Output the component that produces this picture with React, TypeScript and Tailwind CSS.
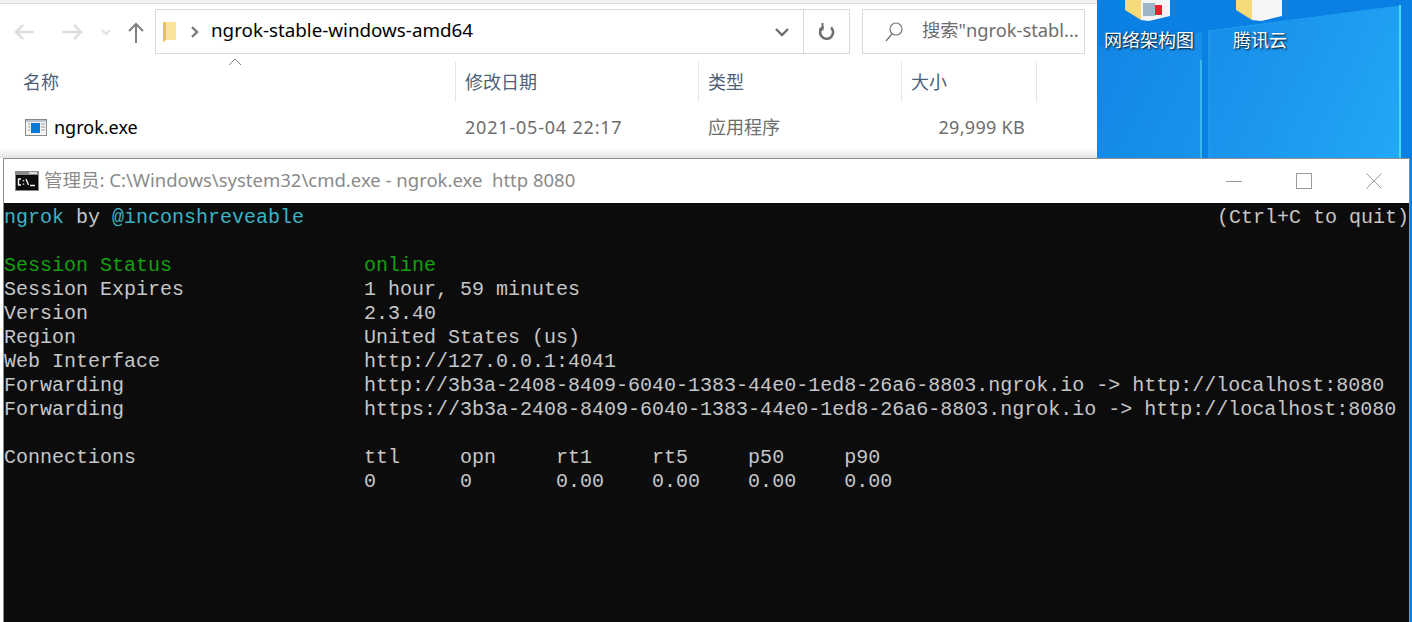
const uiFont = "font-['Noto_Sans','Noto_Sans_CJK_SC',sans-serif]";

const columns = [
  { label: "修改日期", width: "w-[243px]" },
  { label: "类型", width: "w-[203px]" },
  { label: "大小", width: "w-[135px]" },
];

function Terminal() {
  const rows = [
    "Session Expires               1 hour, 59 minutes",
    "Version                       2.3.40",
    "Region                        United States (us)",
    "Web Interface                 http://127.0.0.1:4041",
    "Forwarding                    http://3b3a-2408-8409-6040-1383-44e0-1ed8-26a6-8803.ngrok.io -> http://localhost:8080",
    "Forwarding                    https://3b3a-2408-8409-6040-1383-44e0-1ed8-26a6-8803.ngrok.io -> http://localhost:8080",
    "",
    "Connections                   ttl     opn     rt1     rt5     p50     p90",
    "                              0       0       0.00    0.00    0.00    0.00",
  ];
  return (
    <div className="flex-1 bg-[#0c0c0c] pt-[3px] text-[20px] leading-6 text-[#c6c6c6] whitespace-pre font-['Liberation_Mono',monospace] overflow-hidden">
      <div className="flex justify-between w-[1405px]">
        <div>
          <span className="text-[#3ab4c4]">ngrok</span> by <span className="text-[#3ab4c4]">@inconshreveable</span>
        </div>
        <div>(Ctrl+C to quit)</div>
      </div>
      <div className="h-6" />
      <div className="text-[#13a10e]">{"Session Status                online"}</div>
      {rows.map((row, i) => (
        <div key={i} className="h-6">
          {row}
        </div>
      ))}
    </div>
  );
}

function Explorer() {
  return (
    <div className={`w-[1097px] shrink-0 h-[158px] bg-white ${uiFont} flex flex-col`}>
      <div className="h-[4px] bg-[#f0f0f0] border-b border-[#dcdcdc]" />
      {/* toolbar */}
      <div className="flex items-center h-[45px] mt-[5px]">
        <div className="w-[155px] flex items-center shrink-0">
          <svg width="155" height="45" viewBox="0 0 155 45" fill="none">
            <path d="M17 23h17M23 16l-7 7 7 7" stroke="#dedede" strokeWidth="2.5" />
            <path d="M62 23h18M74 16l7 7-7 7" stroke="#dedede" strokeWidth="2.5" />
            <path d="M102 21l4 4 4-4" stroke="#dedede" strokeWidth="2" />
            <path d="M136 34V16M129 22l7-7 7 7" stroke="#7f7f7f" strokeWidth="2" />
          </svg>
        </div>
        <div className="w-[695px] h-[45px] border border-[#d9d9d9] flex items-center">
          <svg width="16" height="22" viewBox="0 0 16 22" className="ml-[6px] shrink-0">
            <path d="M1 1h13v18H4l-3 2z" fill="#f6d978" />
            <path d="M4 1h10v18H4z" fill="#fbe49a" />
            <path d="M1 1h3v18l-3 2z" fill="#e9c355" />
          </svg>
          <svg width="10" height="12" viewBox="0 0 10 12" className="ml-[12px] shrink-0" fill="none">
            <path d="M2 1l5 5-5 5" stroke="#7a7a7a" strokeWidth="2.4" />
          </svg>
          <span className="ml-[11px] text-[18.8px] text-black leading-none -translate-y-px">ngrok-stable-windows-amd64</span>
          <div className="ml-auto flex items-center h-full">
            <svg width="16" height="10" viewBox="0 0 16 10" className="mr-[13px]" fill="none">
              <path d="M2 2l6 6 6-6" stroke="#6e6e6e" strokeWidth="2.4" />
            </svg>
            <div className="w-[46px] h-full border-l border-[#d9d9d9] flex items-center justify-center">
              <svg width="18" height="20" viewBox="0 0 18 20" fill="none">
                <path d="M13 5.5A6.5 6.5 0 1 1 5.5 4.6" stroke="#707070" strokeWidth="2.6" />
                <path d="M4.5 1v6.5H1" stroke="#707070" strokeWidth="2" />
              </svg>
            </div>
          </div>
        </div>
        <div className="w-[223px] h-[45px] ml-[12px] border border-[#d9d9d9] flex items-center">
          <svg width="20" height="22" viewBox="0 0 20 22" className="ml-[21px] shrink-0" fill="none">
            <circle cx="12" cy="8" r="6" stroke="#7a7a7a" strokeWidth="1.2" />
            <path d="M8 13l-6 7" stroke="#7a7a7a" strokeWidth="1.4" />
          </svg>
          <span className="ml-[18px] text-[18.3px] leading-none text-[#6d6d6d] whitespace-nowrap -translate-y-px">搜索"ngrok-stabl...</span>
        </div>
      </div>
      {/* column headers */}
      <div className="flex h-[40px] mt-[8px] text-[18px] text-[#4c607a] relative">
        <div className="w-[456px] border-r border-[#e5e5e5] flex items-center pl-[23px]">名称</div>
        <svg width="14" height="8" viewBox="0 0 14 8" className="absolute left-[228px] top-[-4px]" fill="none">
          <path d="M1 7l6-6 6 6" stroke="#808080" strokeWidth="1" />
        </svg>
        {columns.map((c) => (
          <div key={c.label} className={`${c.width} border-r border-[#e5e5e5] flex items-center pl-[9px]`}>
            {c.label}
          </div>
        ))}
      </div>
      {/* file row */}
      <div className="flex items-center h-[30px] mt-[10px] text-[18px] text-[#6d6d6d]">
        <div className="w-[456px] flex items-center pl-[25px]">
          <svg width="22" height="17" viewBox="0 0 22 17" className="shrink-0">
            <rect x="0.5" y="0.5" width="21" height="16" fill="#f5f5f5" stroke="#8a8a8a" />
            <rect x="1" y="1" width="20" height="2" fill="#b8c4d0" />
            <rect x="6" y="4" width="9" height="10" fill="#0a78d7" />
            <path d="M3 5h2M3 8h2M3 11h2M16 5h4M16 8h4M16 11h4" stroke="#9a9a9a" />
          </svg>
          <span className="ml-[7px] text-black">ngrok.exe</span>
        </div>
        <div className="w-[243px] pl-[9px] tracking-[0.8px]">2021-05-04 22:17</div>
        <div className="w-[203px] pl-[9px]">应用程序</div>
        <div className="w-[123px] text-right tracking-[0.3px]">29,999 KB</div>
      </div>
      <div className="mt-auto h-[10px] bg-gradient-to-b from-white to-[#e4e4e4]" />
    </div>
  );
}

function Desktop() {
  return (
    <div className={`flex-1 h-full relative bg-[#0a7fe4] ${uiFont} overflow-hidden`}>
      <svg width="315" height="622" viewBox="0 0 315 622" className="absolute inset-0">
        <defs>
          <linearGradient id="pane" gradientUnits="userSpaceOnUse" x1="0" y1="20" x2="300" y2="160">
            <stop offset="0" stopColor="#1285e6" />
            <stop offset="0.5" stopColor="#1a94ec" />
            <stop offset="1" stopColor="#22a8f5" />
          </linearGradient>
        </defs>
        <path d="M0 47L105 32V622H0z" fill="url(#pane)" />
        <path d="M112 31L303 6V622H112z" fill="url(#pane)" />
        <path d="M104 60V622" stroke="#35b8ee" strokeWidth="2" />
        <path d="M112 31V622" stroke="#2fa8ec" strokeWidth="1" />
        <path d="M112 31L303 6" stroke="#1f9fef" strokeWidth="1" />
        <path d="M303 5V622" stroke="#45dcef" strokeWidth="2" />
        <g>
          <path d="M28 0h16v20L28 10z" fill="#f6d978" />
          <path d="M44 0h29v16l-21 5-8-1z" fill="#f4f4f4" />
          <path d="M46 3h12v13H46z" fill="#9fb4c4" />
          <path d="M58 5h7v10h-7z" fill="#e8202c" />
          <path d="M139 0h16v20L139 10z" fill="#f6d978" />
          <path d="M155 0h30v16l-21 5-9-1z" fill="#f6f6f6" />
        </g>
      </svg>
      <div className="relative flex text-white text-[18px] leading-none [text-shadow:1px_1px_2px_#000] whitespace-nowrap pt-[31px] pl-[7px]">
        <span>网络架构图</span>
        <span className="ml-[39px]">腾讯云</span>
      </div>
    </div>
  );
}

export default function App() {
  return (
    <div className="relative w-[1412px] h-[622px] overflow-hidden flex bg-white">
      <Explorer />
      <Desktop />
      {/* cmd window */}
      <div className={`absolute left-[3px] top-[158px] w-[1407px] h-[464px] bg-white border border-b-0 border-[#8f8f8f] flex flex-col ${uiFont}`}>
        <div className="h-[44px] flex items-center shrink-0">
          <svg width="24" height="20" viewBox="0 0 24 20" className="ml-[11px] shrink-0">
            <rect x="0" y="0" width="24" height="20" fill="#8a8a8a" />
            <rect x="1" y="4" width="22" height="15" fill="#0c0c0c" />
            <rect x="14" y="1" width="8" height="2" fill="#dddddd" />
            <path d="M6 8H3.5v6H6M8.5 9v1.2M8.5 12.5v1.2M11 8l2.5 6M15 14.5h5" stroke="#f4f4f4" strokeWidth="1.4" fill="none" />
          </svg>
          <span className="ml-[5px] text-[18.5px] text-[#8a8a8a] whitespace-pre leading-none -translate-y-px">管理员: C:\Windows\system32\cmd.exe - ngrok.exe  http 8080</span>
          <div className="ml-auto flex items-center gap-[54px] pr-[27px]">
            <svg width="16" height="16" viewBox="0 0 16 16" fill="none">
              <path d="M0 8.5h16" stroke="#9a9a9a" />
            </svg>
            <svg width="16" height="16" viewBox="0 0 16 16" fill="none">
              <rect x="0.5" y="0.5" width="15" height="15" stroke="#9a9a9a" />
            </svg>
            <svg width="16" height="16" viewBox="0 0 16 16" fill="none">
              <path d="M0.5 0.5l15 15M15.5 0.5l-15 15" stroke="#9a9a9a" />
            </svg>
          </div>
        </div>
        <Terminal />
      </div>
    </div>
  );
}
